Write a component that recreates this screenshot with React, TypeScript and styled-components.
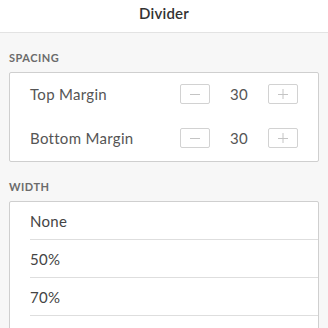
import React from 'react'
import styled, { createGlobalStyle } from 'styled-components'

const GlobalStyle = createGlobalStyle`
  html, body {
    margin: 0;
    padding: 0;
    background: #f7f7f7;
    font-family: Lato, "Open Sans", "Liberation Sans", sans-serif;
    -webkit-font-smoothing: antialiased;
  }
`

const Panel = styled.div`
  width: 328px;
  height: 328px;
  overflow: hidden;
  background: #f7f7f7;
`

const Header = styled.header`
  height: 33px;
  box-sizing: border-box;
  padding-bottom: 7px;
  display: flex;
  align-items: center;
  justify-content: center;
  background: #fff;
  border-bottom: 1px solid #e3e3e3;
  color: #333;
  font-size: 15px;
  font-weight: 600;
  letter-spacing: 0.2px;
`

const Section = styled.section`
  padding: 0 9px;
`

const Label = styled.div`
  margin-top: 18px;
  margin-bottom: 7px;
  line-height: 14px;
  font-size: 11px;
  font-weight: 700;
  letter-spacing: 0.5px;
  color: #6b6b6b;
  text-transform: uppercase;
`

const Card = styled.div<{ $tail?: number }>`
  background: #fff;
  border: 1px solid #cfcfcf;
  border-radius: 2px;
  padding-bottom: ${({ $tail }) => $tail || 0}px;
`

const StepRow = styled.div`
  height: 44px;
  box-sizing: border-box;
  padding: 0 20px 2px;
  display: flex;
  align-items: center;
  color: #555;
  font-size: 15px;
  letter-spacing: 0.3px;
`

const RowLabel = styled.span`
  flex: 1;
`

const StepButton = styled.button`
  width: 30px;
  height: 20px;
  box-sizing: border-box;
  padding: 0;
  display: flex;
  align-items: center;
  justify-content: center;
  background: #fff;
  border: 1px solid #d2d2d2;
  border-radius: 2px;
`

const Value = styled.span`
  width: 58px;
  text-align: center;
  color: #555;
  font-size: 15px;
  letter-spacing: 0.3px;
`

const Option = styled.div`
  height: 37px;
  margin-left: 20px;
  display: flex;
  align-items: center;
  border-bottom: 1px solid #dedede;
  color: #444;
  font-size: 15px;
  letter-spacing: 0.3px;
`

const Glyph = ({ plus }: { plus?: boolean }) => (
  <svg width="10" height="10" viewBox="0 0 10 10">
    <path d="M0 5.5h10" stroke="#c4c4c4" strokeWidth="1" />
    {plus && <path d="M5 0v10" stroke="#c4c4c4" strokeWidth="1" />}
  </svg>
)

const Stepper = ({ label, value }: { label: string; value: number }) => (
  <StepRow>
    <RowLabel>{label}</RowLabel>
    <StepButton aria-label="Decrease"><Glyph /></StepButton>
    <Value>{value}</Value>
    <StepButton aria-label="Increase"><Glyph plus /></StepButton>
  </StepRow>
)

const widths = ['None', '50%', '70%']

export default function App() {
  return (
    <Panel>
      <GlobalStyle />
      <Header>Divider</Header>
      <Section>
        <Label>Spacing</Label>
        <Card>
          <Stepper label="Top Margin" value={30} />
          <Stepper label="Bottom Margin" value={30} />
        </Card>
        <Label>Width</Label>
        <Card $tail={40}>
          {widths.map(w => (
            <Option key={w}>{w}</Option>
          ))}
        </Card>
      </Section>
    </Panel>
  )
}
